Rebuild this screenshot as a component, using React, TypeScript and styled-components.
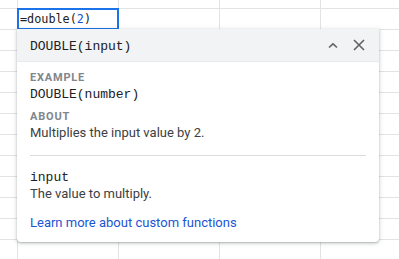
import styled, { createGlobalStyle } from 'styled-components';

const GlobalStyle = createGlobalStyle`
  html, body {
    margin: 0;
    padding: 0;
    background: #ffffff;
    overflow: hidden;
  }
`;

const COLS = [18, 101, 101, 101, 101];
const ROW_COUNT = 12;

const Sheet = styled.div`
  position: relative;
  width: 399px;
  height: 259px;
  overflow: hidden;
`;

const Grid = styled.div`
  display: grid;
  grid-template-columns: ${COLS.map((c) => `${c}px`).join(' ')};
  grid-template-rows: 9px repeat(${ROW_COUNT}, 21px);
`;

const Cell = styled.div<{ $active?: boolean }>`
  position: relative;
  box-sizing: border-box;
  border-right: 1px solid #e2e3e3;
  border-bottom: 1px solid #e2e3e3;
  font-family: 'DejaVu Sans Mono', monospace;
  font-size: 11.8px;
  color: #202124;
  display: flex;
  align-items: center;
  padding-left: 2px;
  white-space: nowrap;

  ${(p) =>
    p.$active &&
    `
    z-index: 2;
    &::after {
      content: '';
      position: absolute;
      left: -1px;
      top: -1px;
      right: -1px;
      bottom: -1px;
      border: 2px solid #1a73e8;
    }
  `}
`;

const Num = styled.span`
  color: #1a55d3;
`;

const Popup = styled.div`
  position: absolute;
  left: 17px;
  top: 29px;
  width: 362px;
  box-sizing: border-box;
  background: #fff;
  border-radius: 0 0 4px 4px;
  box-shadow: 0 1px 2px rgba(60, 64, 67, 0.3), 0 1px 4px 1px rgba(60, 64, 67, 0.15);
  z-index: 3;
  overflow: hidden;
`;

const Header = styled.div`
  display: flex;
  align-items: center;
  height: 32px;
  padding: 0 14px 0 13px;
  background: #f1f3f4;
  border-bottom: 1px solid #e8eaed;
`;

const Code = styled.span`
  font-family: 'Liberation Mono', 'Courier New', monospace;
  font-size: 13px;
  color: #202124;
`;

const HeaderTitle = styled(Code)`
  flex: 1;
  padding-top: 3px;
`;

const IconButton = styled.button`
  border: 0;
  background: none;
  padding: 0;
  display: flex;
  align-items: center;
  justify-content: center;
  color: #5f6368;
  cursor: pointer;
`;

const Icons = styled.div`
  display: flex;
  align-items: center;
  gap: 15px;
`;

const Body = styled.div`
  display: flex;
  flex-direction: column;
  padding: 8px 13px 11px 13px;
`;

const Section = styled.div`
  display: flex;
  flex-direction: column;
`;

const Label = styled.div<{ $gap?: number }>`
  font-family: Roboto, sans-serif;
  font-size: 11px;
  font-weight: 700;
  letter-spacing: 0.8px;
  color: #80868b;
  line-height: 16px;
  margin-top: ${(p) => p.$gap ?? 0}px;
`;

const CodeLine = styled(Code)`
  line-height: 17px;
`;

const Text = styled.div`
  font-family: Roboto, sans-serif;
  font-size: 13px;
  color: #3c4043;
  line-height: 16px;
`;

const Divider = styled.div`
  height: 1px;
  background: #dadce0;
  margin: 14px 0 13px;
`;

const Link = styled.a`
  font-family: Roboto, sans-serif;
  font-size: 13px;
  color: #1a55d3;
  text-decoration: none;
  margin-top: 13px;
  line-height: 16px;
`;

function ChevronUp() {
  return (
    <svg width="10" height="7" viewBox="0 0 10 7">
      <path d="M1 5.5 L5 1.8 L9 5.5" fill="none" stroke="currentColor" strokeWidth="1.6" />
    </svg>
  );
}

function Close() {
  return (
    <svg width="12" height="12" viewBox="0 0 12 12">
      <path d="M1 1 L11 11 M11 1 L1 11" fill="none" stroke="currentColor" strokeWidth="1.6" />
    </svg>
  );
}

export default function App() {
  const cells = [];
  for (let r = 0; r <= ROW_COUNT; r++) {
    for (let c = 0; c < COLS.length; c++) {
      const active = r === 1 && c === 1;
      cells.push(
        <Cell key={`${r}-${c}`} $active={active}>
          {active && (
            <>
              =double(<Num>2</Num>)
            </>
          )}
        </Cell>
      );
    }
  }

  return (
    <Sheet>
      <GlobalStyle />
      <Grid>{cells}</Grid>
      <Popup>
        <Header>
          <HeaderTitle>DOUBLE(input)</HeaderTitle>
          <Icons>
            <IconButton aria-label="Collapse">
              <ChevronUp />
            </IconButton>
            <IconButton aria-label="Close">
              <Close />
            </IconButton>
          </Icons>
        </Header>
        <Body>
          <Section>
            <Label>EXAMPLE</Label>
            <CodeLine>DOUBLE(number)</CodeLine>
            <Label $gap={6}>ABOUT</Label>
            <Text>Multiplies the input value by 2.</Text>
          </Section>
          <Divider />
          <Section>
            <CodeLine>input</CodeLine>
            <Text>The value to multiply.</Text>
          </Section>
          <Link href="#">Learn more about custom functions</Link>
        </Body>
      </Popup>
    </Sheet>
  );
}
